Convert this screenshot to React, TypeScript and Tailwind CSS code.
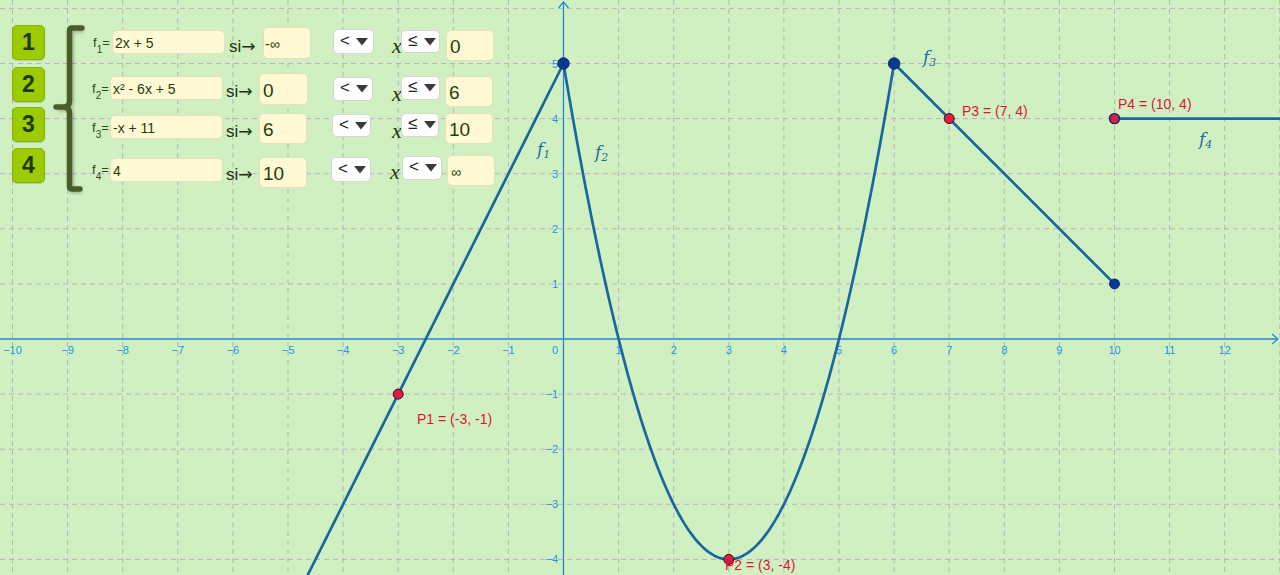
import React from "react";

const OX = 563.5;
const OY = 339;
const S = 55.1;
const X = (v: number) => OX + v * S;
const Y = (v: number) => OY - v * S;
const CURVE = "#19679e";
const LABEL = "#2193ec";
const MINUS = "\u2212";

function Graph() {
  const vlines: React.ReactElement[] = [];
  for (let i = -10; i <= 13; i++) {
    if (i === 0) continue;
    vlines.push(
      <line key={"v" + i} x1={X(i)} y1={0} x2={X(i)} y2={575} stroke="#b9b0c2" strokeWidth={1} strokeDasharray="5 4" />
    );
  }
  const hlines: React.ReactElement[] = [];
  for (let j = -4; j <= 6; j++) {
    if (j === 0) continue;
    hlines.push(
      <line key={"h" + j} x1={0} y1={Y(j)} x2={1280} y2={Y(j)} stroke="#b9b0c2" strokeWidth={1} strokeDasharray="5 4" />
    );
  }
  const xl: React.ReactElement[] = [];
  for (let i = -10; i <= 12; i++) {
    if (i === 0) continue;
    xl.push(
      <text key={"xl" + i} x={X(i)} y={354} textAnchor="middle" fontSize={11} fill={LABEL} fontFamily="Liberation Sans, sans-serif">
        {i < 0 ? MINUS + Math.abs(i) : String(i)}
      </text>
    );
  }
  const yl: React.ReactElement[] = [];
  for (let j = -4; j <= 5; j++) {
    if (j === 0) continue;
    yl.push(
      <text key={"yl" + j} x={558} y={Y(j) + 4} textAnchor="end" fontSize={11} fill={LABEL} fontFamily="Liberation Sans, sans-serif">
        {j < 0 ? MINUS + Math.abs(j) : String(j)}
      </text>
    );
  }
  let para = "";
  for (let t = 0; t <= 6.0001; t += 0.05) {
    const v = t * t - 6 * t + 5;
    para += (t === 0 ? "M" : "L") + X(t).toFixed(2) + " " + Y(v).toFixed(2) + " ";
  }
  const x0 = -4.7;
  return (
    <svg width={1280} height={575} className="block" viewBox="0 0 1280 575">
      <rect x={0} y={0} width={1280} height={575} fill="#d1f0c2" />
      {vlines}
      {hlines}
      <line x1={0} y1={OY} x2={1278} y2={OY} stroke="#2088d8" strokeWidth={1.3} />
      <polyline points={`1272,${OY - 5} 1278,${OY} 1272,${OY + 5}`} fill="none" stroke="#2088d8" strokeWidth={1.2} />
      <line x1={OX} y1={575} x2={OX} y2={2} stroke="#2088d8" strokeWidth={1.3} />
      <polyline points={`${OX - 5},8 ${OX},2 ${OX + 5},8`} fill="none" stroke="#2088d8" strokeWidth={1.2} />
      {xl}
      {yl}
      <text x={558} y={354} textAnchor="end" fontSize={11} fill={LABEL} fontFamily="Liberation Sans, sans-serif">0</text>

      <path d={`M${X(x0)} ${Y(2 * x0 + 5)} L${X(0)} ${Y(5)}`} stroke={CURVE} strokeWidth={2.7} fill="none" />
      <path d={para} stroke={CURVE} strokeWidth={2.7} fill="none" />
      <path d={`M${X(6)} ${Y(5)} L${X(10)} ${Y(1)}`} stroke={CURVE} strokeWidth={2.7} fill="none" />
      <path d={`M${X(10)} ${Y(4)} L1280 ${Y(4)}`} stroke={CURVE} strokeWidth={2.7} fill="none" />

      <circle cx={X(0)} cy={Y(5)} r={5.8} fill="#0b3796" stroke="#0a1e4a" strokeWidth={0.8} />
      <circle cx={X(6)} cy={Y(5)} r={5.8} fill="#0b3796" stroke="#0a1e4a" strokeWidth={0.8} />
      <circle cx={X(10)} cy={Y(1)} r={5} fill="#0b3796" stroke="#0a1e4a" strokeWidth={0.8} />

      <circle cx={X(-3)} cy={Y(-1)} r={5} fill="#dc1e46" stroke="#2a1010" strokeWidth={1} />
      <circle cx={X(3)} cy={Y(-4)} r={5} fill="#dc1e46" stroke="#2a1010" strokeWidth={1} />
      <circle cx={X(7)} cy={Y(4)} r={5} fill="#dc1e46" stroke="#2a1010" strokeWidth={1} />
      <circle cx={X(10)} cy={Y(4)} r={5} fill="#dc1e46" stroke="#0b2a6a" strokeWidth={1.4} />

      <g fontFamily="Liberation Sans, sans-serif" fontSize={14} fill="#dc143c">
        <text x={417} y={424}>P1 = (-3, -1)</text>
        <text x={725} y={570}>P2 = (3, -4)</text>
        <text x={962} y={116}>P3 = (7, 4)</text>
        <text x={1118} y={109}>P4 = (10, 4)</text>
      </g>
      <g fontFamily="DejaVu Serif, serif" fill="#1d6aa3">
        <text x={537} y={155} fontSize={17} fontStyle="italic">f<tspan fontSize={11} dy={3}>1</tspan></text>
        <text x={595} y={158} fontSize={17} fontStyle="italic">f<tspan fontSize={11} dy={3}>2</tspan></text>
        <text x={923} y={63} fontSize={17} fontStyle="italic">f<tspan fontSize={11} dy={3}>3</tspan></text>
        <text x={1199} y={145} fontSize={17} fontStyle="italic">f<tspan fontSize={11} dy={3}>4</tspan></text>
      </g>
    </svg>
  );
}

function Tri() {
  return (
    <svg width={12} height={8} viewBox="0 0 12 8" className="block">
      <polygon points="0,0 12,0 6,7.5" fill="#3a3a3a" />
    </svg>
  );
}

type Row = {
  h: string;
  sub: string;
  labelCls: string;
  expr: string;
  in1Cls: string;
  siCls: string;
  in2Cls: string;
  v1: string;
  v1Cls: string;
  dd1Cls: string;
  xCls: string;
  dd2Cls: string;
  op2: string;
  in3Cls: string;
  v2: string;
  v2Cls: string;
};

const rows: Row[] = [
  {
    h: "h-[46px]",
    sub: "1",
    labelCls: "w-[20px] mt-[9px] pl-[1px]",
    expr: "2x + 5",
    in1Cls: "mt-[3px]",
    siCls: "ml-[4px] w-[34px] mt-[11px]",
    in2Cls: "mt-[0px] w-[48px] h-[32px] pl-[1px]",
    v1: "-\u221e",
    v1Cls: "text-[14px]",
    dd1Cls: "ml-[22px] mt-[2px] w-[41px] h-[25px]",
    xCls: "ml-[18px] mt-[8px] w-[9px]",
    dd2Cls: "mt-[3px] w-[39px] h-[23px]",
    op2: "\u2264",
    in3Cls: "ml-[6px] mt-[3px] h-[31px]",
    v2: "0",
    v2Cls: "text-[19px]",
  },
  {
    h: "h-[40px]",
    sub: "2",
    labelCls: "w-[18px] mt-[9px]",
    expr: "x\u00b2 - 6x + 5",
    in1Cls: "mt-[3px]",
    siCls: "ml-[3px] w-[33px] mt-[10px]",
    in2Cls: "mt-[0px] w-[49px] h-[32px] pl-[3px]",
    v1: "0",
    v1Cls: "text-[19px]",
    dd1Cls: "ml-[25px] mt-[4px] w-[40px] h-[24px]",
    xCls: "ml-[19px] mt-[10px] w-[9px]",
    dd2Cls: "mt-[3px] w-[39px] h-[24px]",
    op2: "\u2264",
    in3Cls: "ml-[5px] mt-[3px] h-[31px]",
    v2: "6",
    v2Cls: "text-[19px]",
  },
  {
    h: "h-[42px]",
    sub: "3",
    labelCls: "w-[18px] mt-[8px]",
    expr: "-x + 11",
    in1Cls: "mt-[2px]",
    siCls: "ml-[3px] w-[33px] mt-[10px]",
    in2Cls: "mt-[0px] w-[48px] h-[31px] pl-[3px]",
    v1: "6",
    v1Cls: "text-[19px]",
    dd1Cls: "ml-[25px] mt-[1px] w-[39px] h-[23px]",
    xCls: "ml-[21px] mt-[7px] w-[9px]",
    dd2Cls: "mt-[0px] w-[38px] h-[24px]",
    op2: "\u2264",
    in3Cls: "ml-[6px] mt-[0px] h-[31px]",
    v2: "10",
    v2Cls: "text-[19px]",
  },
  {
    h: "h-[35px]",
    sub: "4",
    labelCls: "w-[18px] mt-[8px]",
    expr: "4",
    in1Cls: "mt-[3px]",
    siCls: "ml-[3px] w-[33px] mt-[11px]",
    in2Cls: "mt-[2px] w-[48px] h-[31px] pl-[3px]",
    v1: "10",
    v1Cls: "text-[19px]",
    dd1Cls: "ml-[24px] mt-[2px] w-[40px] h-[25px]",
    xCls: "ml-[19px] mt-[6px] w-[12px]",
    dd2Cls: "mt-[1px] w-[40px] h-[24px]",
    op2: "<",
    in3Cls: "ml-[5px] mt-[0px] h-[31px]",
    v2: "\u221e",
    v2Cls: "text-[14px]",
  },
];

function Dropdown({ op, cls }: { op: string; cls: string }) {
  return (
    <div className={`${cls} flex items-center bg-white border border-[#d6d6d6] rounded-[5px] pl-[6px] shrink-0`}>
      <span className="text-[17px] leading-none text-[#222] w-[16px] -mt-[3px]">{op}</span>
      <Tri />
    </div>
  );
}

function Panel() {
  const btns = [
    { n: "1", cls: "mt-[0px]" },
    { n: "2", cls: "mt-[7px]" },
    { n: "3", cls: "mt-[5px]" },
    { n: "4", cls: "mt-[6px]" },
  ];
  return (
    <div className="absolute left-0 top-0 flex items-start" style={{ fontFamily: '"Liberation Sans", Arial, sans-serif' }}>
      <div className="ml-[12px] mt-[25px] flex flex-col">
        {btns.map((b) => (
          <div
            key={b.n}
            className={`${b.cls} w-[33px] h-[35px] rounded-[5px] bg-[#9bcb00] border border-[#86b300] shadow-[0_1px_1px_rgba(0,0,0,0.15)] flex items-center justify-center text-[23px] font-bold text-[#1c3a0a] leading-none`}
          >
            {b.n}
          </div>
        ))}
      </div>
      <svg width={42} height={196} viewBox="0 0 42 196" className="ml-[5px] block shrink-0">
        <defs>
          <filter id="bsh" x="-50%" y="-20%" width="200%" height="140%">
            <feGaussianBlur stdDeviation="1.6" />
          </filter>
        </defs>
        <path
          d="M32 28 H22 Q19.5 28 19.5 31 V101 Q19.5 107 13 107 H6 M13 107 Q19.5 107 19.5 113 V186 Q19.5 189 22 189 H30"
          fill="none"
          stroke="#000"
          strokeOpacity={0.25}
          strokeWidth={6}
          filter="url(#bsh)"
          transform="translate(1.5,1.5)"
        />
        <path
          d="M32 28 H22 Q19.5 28 19.5 31 V101 Q19.5 107 13 107 H6 M13 107 Q19.5 107 19.5 113 V186 Q19.5 189 22 189 H30"
          fill="none"
          stroke="#4b5d29"
          strokeWidth={5.5}
          strokeLinecap="round"
          strokeLinejoin="round"
        />
      </svg>
      <div className="pt-[27px] flex flex-col">
        {rows.map((r, i) => (
          <div key={i} className={`${r.h} flex items-start`}>
            <div className={`${r.labelCls} text-[13px] leading-none text-[#2c4a1c] whitespace-nowrap shrink-0`}>
              f<span className="relative top-[6px] text-[10px]">{r.sub}</span>=
            </div>
            <div
              className={`${r.in1Cls} w-[113px] h-[24px] shrink-0 flex items-center pt-[1px] pl-[2px] bg-[#fff9d4] border border-[#e4dfbd] rounded-[5px] text-[14px] leading-none text-[#1f3d0e] whitespace-nowrap`}
            >
              {r.expr}
            </div>
            <div className={`${r.siCls} shrink-0 flex items-baseline text-[17px] leading-none text-[#1d3310] whitespace-nowrap`}>
              <span>si</span>
              <span className="text-[17px]" style={{ fontFamily: '"DejaVu Sans", sans-serif' }}>{"\u2192"}</span>
            </div>
            <div
              className={`${r.in2Cls} ${r.v1Cls} shrink-0 flex items-center pt-[2px] bg-[#fff9d4] border border-[#e4dfbd] rounded-[5px] leading-none text-[#1f3d0e] whitespace-nowrap`}
            >
              {r.v1}
            </div>
            <Dropdown op="<" cls={r.dd1Cls} />
            <div
              className={`${r.xCls} shrink-0 text-[22px] leading-none italic text-[#1f3d0e]`}
              style={{ fontFamily: '"Liberation Serif", "Times New Roman", serif' }}
            >
              x
            </div>
            <Dropdown op={r.op2} cls={r.dd2Cls} />
            <div
              className={`${r.in3Cls} ${r.v2Cls} w-[48px] shrink-0 flex items-center pt-[2px] pl-[3px] bg-[#fff9d4] border border-[#e4dfbd] rounded-[5px] leading-none text-[#1f3d0e] whitespace-nowrap`}
            >
              {r.v2}
            </div>
          </div>
        ))}
      </div>
    </div>
  );
}

export default function App() {
  return (
    <div className="relative w-[1280px] h-[575px] overflow-hidden bg-[#d1f0c2]">
      <Graph />
      <Panel />
    </div>
  );
}
